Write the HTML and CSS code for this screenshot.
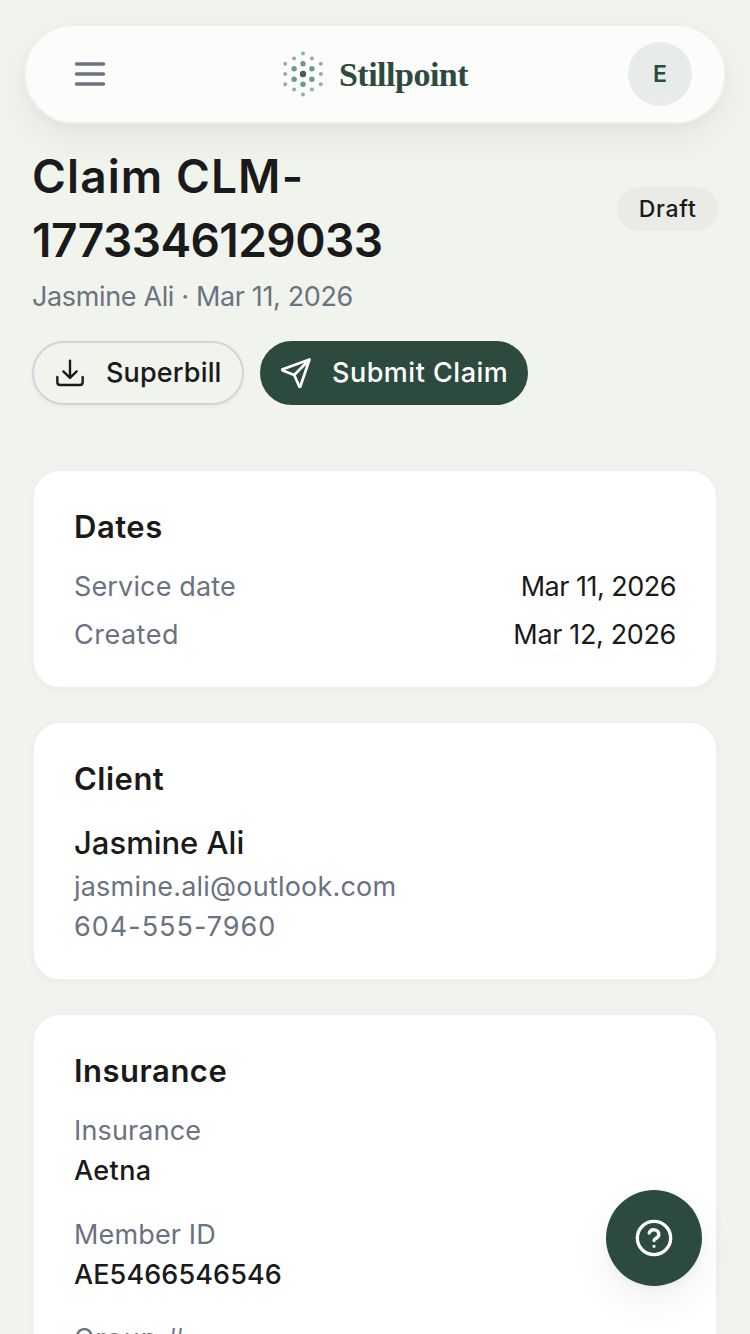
FILE: index.html
```html
<!DOCTYPE html>
<html lang="en">
<head>
  <meta charset="UTF-8">
  <meta name="viewport" content="width=device-width, initial-scale=1.0">
  <title>Claim CLM-1773346129033 - Stillpoint</title>
  <link rel="stylesheet" href="styles.css">
</head>
<body>
  <header class="topbar">
    <button type="button" class="menu-btn" aria-label="Menu">
      <svg width="40" height="40" viewBox="0 0 40 40" fill="none" stroke="currentColor" stroke-width="3.4" stroke-linecap="round"><path d="M6.500 10h27M6.500 20h27M6.500 30h27"/></svg>
    </button>
    <div class="brand">
      <svg class="brand-mark" width="44" height="50" viewBox="-22 -25 44 50">
        <g fill="#94b0a3">
          <circle cx="0" cy="-20.6" r="2"/><circle cx="0" cy="20.6" r="2"/>
          <circle cx="-8.9" cy="-15.5" r="2"/><circle cx="8.9" cy="-15.5" r="2"/>
          <circle cx="-8.9" cy="15.5" r="2"/><circle cx="8.9" cy="15.5" r="2"/>
          <circle cx="-17.8" cy="-10.3" r="2"/><circle cx="17.8" cy="-10.3" r="2"/>
          <circle cx="-17.8" cy="0" r="2"/><circle cx="17.8" cy="0" r="2"/>
          <circle cx="-17.8" cy="10.3" r="2"/><circle cx="17.8" cy="10.3" r="2"/>
        </g>
        <g fill="#6a9a88">
          <circle cx="0" cy="-10.3" r="2.7"/><circle cx="0" cy="10.3" r="2.7"/>
          <circle cx="-8.9" cy="-5.2" r="2.7"/><circle cx="8.9" cy="-5.2" r="2.7"/>
          <circle cx="-8.9" cy="5.2" r="2.7"/><circle cx="8.9" cy="5.2" r="2.7"/>
        </g>
        <circle cx="0" cy="0" r="3.2" fill="#415f51"/>
      </svg>
      <span class="brand-name">Stillpoint</span>
    </div>
    <div class="avatar">E</div>
  </header>

  <main>
    <div class="page-head">
      <div>
        <h1><span class="claim-word">Claim CLM-</span><wbr><span class="claim-no">1773346129033</span></h1>
        <p class="subtitle">Jasmine Ali · Mar 11, 2026</p>
      </div>
      <span class="badge">Draft</span>
    </div>

    <div class="actions">
      <button type="button" class="btn btn-outline">
        <svg width="32" height="32" viewBox="0 0 24 24" fill="none" stroke="currentColor" stroke-width="1.8" stroke-linecap="round" stroke-linejoin="round"><path d="M12 2.800v12.700M7 10.800l5 4.900 5-4.900M2.500 15v4a2 2 0 0 0 2 2h15a2 2 0 0 0 2-2v-4"/></svg>
        <span class="superbill">Superbill</span>
      </button>
      <button type="button" class="btn btn-primary">
        <svg width="32" height="32" viewBox="0 0 32 32" fill="none" stroke="currentColor" stroke-width="2.7" stroke-linecap="round" stroke-linejoin="round"><path d="M29.500 2.500 2.800 12.200a.6.6 0 0 0 0 1.200l11.400 4.600 5 11.300a.6.6 0 0 0 1.200 0zM29.500 2.500 14.200 18"/></svg>
        <span class="submit">Submit Claim</span>
      </button>
    </div>

    <section class="card">
      <h2>Dates</h2>
      <div class="rows">
        <div class="row"><span class="label">Service date</span><span class="date">Mar 11, 2026</span></div>
        <div class="row"><span class="label created">Created</span><span class="date created-date">Mar 12, 2026</span></div>
      </div>
    </section>

    <section class="card">
      <h2>Client</h2>
      <p class="client-name">Jasmine Ali</p>
      <p class="label email">jasmine.ali@outlook.com</p>
      <p class="label phone">604-555-7960</p>
    </section>

    <section class="card">
      <h2>Insurance</h2>
      <dl>
        <div><dt>Insurance</dt><dd>Aetna</dd></div>
        <div><dt>Member ID</dt><dd class="member">AE5466546546</dd></div>
        <div><dt class="group">Group #</dt></div>
      </dl>
    </section>
  </main>

  <button type="button" class="help-btn" aria-label="Help">
    <svg width="40" height="40" viewBox="0 0 24 24" fill="none" stroke="currentColor" stroke-width="2" stroke-linecap="round" stroke-linejoin="round"><circle cx="12" cy="12" r="10"/><path d="M9.100 9a3 3 0 0 1 5.800 1c0 2-2.900 2.400-2.900 3.500M12 17h.01"/></svg>
  </button>
</body>
</html>
```

FILE: styles.css
```css
* { box-sizing: border-box; }
html { overflow: hidden; }
body { margin: 0; padding: 24px 32px 0; height: 1334px; overflow: hidden; background: #f1f4ed; color: #1a1a1a; font-family: Inter, "Liberation Sans", sans-serif; font-size: 27px; line-height: 40px; }
h1, h2, p, dl, dd { margin: 0; }
button { font: inherit; cursor: pointer; }
svg { display: block; flex: none; }

.topbar { display: flex; align-items: center; justify-content: space-between; height: 100px; margin: 0 -8px; padding: 0 32px 0 44px; background: #fcfdfb; border: 2px solid #eff1f0; border-radius: 50px; box-shadow: 0 16px 40px -4px rgba(26,40,26,0.07), 0 4px 12px rgba(26,40,26,0.03); }
.menu-btn { padding: 0; border: 0; background: none; color: #6b7280; }
.brand { display: flex; align-items: center; gap: 14px; margin-left: 11px; }
.brand-name { padding-top: 2px; color: #2d4a3e; font-family: "Liberation Serif", serif; font-size: 34px; font-weight: bold; letter-spacing: -0.5px; }
.avatar { display: flex; align-items: center; justify-content: center; width: 64px; height: 64px; border-radius: 50%; background: #e7ebe9; color: #2d4a3e; font-size: 23px; font-weight: 600; }

.page-head { display: flex; align-items: center; justify-content: space-between; padding-top: 20px; }
.page-head > div { width: 400px; }
h1 { font-size: 46px; line-height: 64px; font-weight: 600; }
.claim-word { letter-spacing: 1.1px; }
.claim-no { letter-spacing: -0.55px; }
.subtitle { margin-top: 5px; color: #6b7280; letter-spacing: -0.36px; }
.badge { margin-top: -43px; padding: 2px 21.5px; border-radius: 22px; background: #e9ebe7; font-size: 23px; font-weight: 500; letter-spacing: 0.7px; }

.actions { display: flex; gap: 16px; margin: 24px 0 64px; }
.btn { display: flex; align-items: center; gap: 20px; height: 64px; padding: 0 20px; border: 2px solid #2d4a3e; border-radius: 32px; background: none; color: #1a1a1a; font-weight: 500; }
.btn-outline { width: 212px; border-color: #d1d3dc; box-shadow: 0 2px 4px rgba(0,0,0,0.05); }
.btn-primary { width: 268px; padding: 0 18px; background: #2d4a3e; color: #fff; }
.superbill { letter-spacing: 0.15px; }
.submit { letter-spacing: 0.5px; white-space: nowrap; }

.card { margin-bottom: 32px; padding: 40px 40px 32px; background: #fff; border: 2px solid #efefef; border-radius: 28px; box-shadow: 0 2px 6px rgba(0,0,0,0.03); }
h2 { margin-bottom: 24px; font-size: 31px; line-height: 32px; font-weight: 600; letter-spacing: 0.5px; }
.rows { display: flex; flex-direction: column; gap: 8px; }
.row { display: flex; justify-content: space-between; }
.label, dt { color: #6b7280; letter-spacing: 0.15px; }
.created { letter-spacing: 0.5px; }
.date { letter-spacing: -0.5px; }
.created-date { letter-spacing: -0.35px; }
.client-name { font-size: 31px; line-height: 48px; font-weight: 500; }
.email { letter-spacing: 0.2px; }
.phone { letter-spacing: 1px; }
dl { display: flex; flex-direction: column; gap: 24px; }
dd { font-weight: 500; letter-spacing: 0.4px; }
.member { letter-spacing: 0.1px; }
.group { letter-spacing: 1.2px; }

.help-btn { position: fixed; right: 48px; bottom: 48px; display: flex; align-items: center; justify-content: center; width: 96px; height: 96px; border: 0; border-radius: 50%; background: #2d4a3e; color: #fff; box-shadow: 0 16px 40px rgba(0,0,0,0.06), 0 4px 12px rgba(0,0,0,0.04); }
```
